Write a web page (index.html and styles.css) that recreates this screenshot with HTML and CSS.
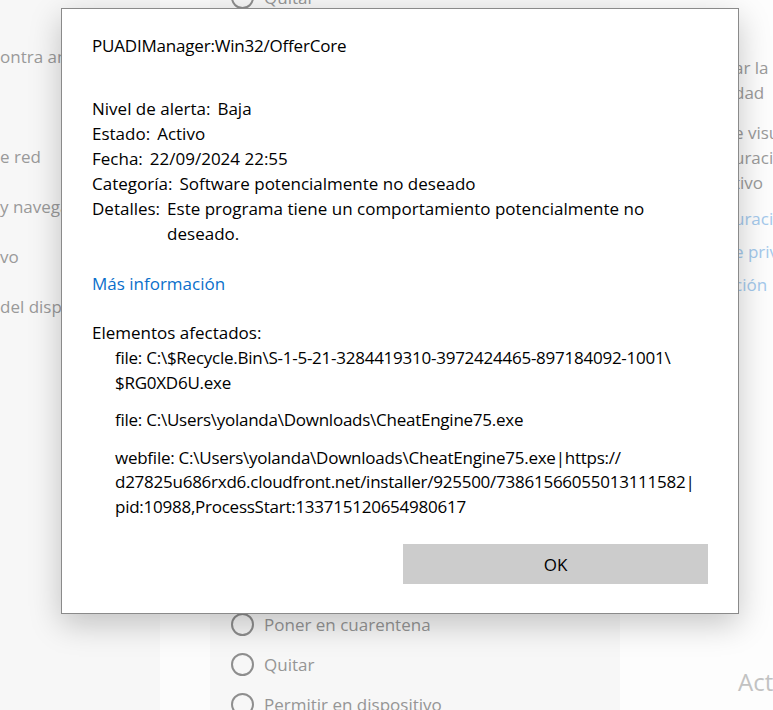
FILE: index.html
```
<!DOCTYPE html>
<html lang="es">
<head>
<meta charset="utf-8">
<title>Windows Security</title>
<link rel="stylesheet" href="styles.css">
</head>
<body>
<div class="page">
  <aside class="sidebar">
    <div class="side-item first">ontra amenazas</div>
    <div class="side-item gap2">e red</div>
    <div class="side-item">y navegador</div>
    <div class="side-item">vo</div>
    <div class="side-item">del dispositivo</div>
  </aside>
  <div class="strip"></div>
  <section class="panel">
    <div class="radio top"><span class="circle"></span><span>Quitar</span></div>
    <div class="radio-group">
      <div class="radio"><span class="circle"></span><span>Poner en cuarentena</span></div>
      <div class="radio"><span class="circle"></span><span>Quitar</span></div>
      <div class="radio"><span class="circle"></span><span>Permitir en dispositivo</span></div>
    </div>
  </section>
  <aside class="right">
    <p class="r-para first">ar la<br>dad</p>
    <p class="r-para">e visu<br>uracio<br>tivo</p>
    <div class="r-links">
      <div class="r-link">uració</div>
      <div class="r-link">e priv</div>
      <div class="r-link">ción</div>
    </div>
    <div class="r-head">Actividad</div>
  </aside>
</div>

<div class="dialog">
  <div class="title">PUADIManager:Win32/OfferCore</div>
  <div class="info">
    <div class="row"><span class="label">Nivel de alerta:</span><span class="value">Baja</span></div>
    <div class="row"><span class="label">Estado:</span><span class="value">Activo</span></div>
    <div class="row"><span class="label">Fecha:</span><span class="value">22/09/2024 22:55</span></div>
    <div class="row"><span class="label">Categoría:</span><span class="value">Software potencialmente no deseado</span></div>
    <div class="row"><span class="label">Detalles:</span><span class="value">Este programa tiene un comportamiento potencialmente no deseado.</span></div>
  </div>
  <a class="more" href="#">Más información</a>
  <div class="affected-title">Elementos afectados:</div>
  <ul class="affected">
    <li>file: C:\$Recycle.Bin\S-1-5-21-3284419310-3972424465-897184092-1001\<br>$RG0XD6U.exe</li>
    <li>file: C:\Users\yolanda\Downloads\CheatEngine75.exe</li>
    <li>webfile: C:\Users\yolanda\Downloads\CheatEngine75.exe|https://<br>d27825u686rxd6.cloudfront.net/installer/925500/73861566055013111582|<br>pid:10988,ProcessStart:133715120654980617</li>
  </ul>
  <div class="actions"><button class="ok">OK</button></div>
</div>
</body>
</html>
```
FILE: styles.css
```
html, body {
  margin: 0;
  padding: 0;
}
body {
  width: 773px;
  height: 710px;
  overflow: hidden;
  position: relative;
  background: #fdfdfd;
  font-family: "Open Sans", "Noto Sans", sans-serif;
  color: #000;
}
.page {
  display: flex;
  height: 710px;
  font-size: 17px;
  color: #9a9a9a;
}
.sidebar {
  width: 160px;
  flex: none;
  background: #f7f7f7;
  overflow: hidden;
  white-space: nowrap;
}
.side-item {
  height: 50px;
  line-height: 50px;
}
.side-item.first {
  margin-top: 32px;
}
.side-item.gap2 {
  margin-top: 50px;
}
.strip {
  width: 50px;
  flex: none;
  background: #fcfcfc;
}
.panel {
  width: 410px;
  flex: none;
  background: #f7f7f7;
  overflow: hidden;
  padding-left: 21px;
  box-sizing: border-box;
}
.radio {
  display: flex;
  align-items: center;
  gap: 10px;
  height: 40px;
  color: #959595;
  white-space: nowrap;
}
.radio.top {
  margin-top: -23px;
}
.radio-group {
  margin-top: 587px;
}
.circle {
  width: 19px;
  height: 19px;
  border: 2px solid #8e8e8e;
  border-radius: 50%;
  flex: none;
}
.right {
  flex: 1;
  overflow: hidden;
  white-space: nowrap;
  padding-left: 114px;
}
.r-para {
  margin: 0;
  line-height: 25px;
}
.r-para.first {
  margin-top: 55px;
}
.r-para + .r-para {
  margin-top: 15px;
}
.r-links {
  margin-top: 7px;
}
.r-link {
  color: #a4c9ec;
  line-height: 33px;
}
.r-head {
  margin-top: 365px;
  margin-left: 4px;
  font-size: 24px;
  color: #c2c2c2;
  line-height: 32px;
}

.dialog {
  position: absolute;
  left: 61px;
  top: 8px;
  width: 678px;
  box-sizing: border-box;
  background: #fff;
  border: 1px solid #8a8a8a;
  box-shadow: 0 10px 30px rgba(0, 0, 0, 0.22);
  padding: 24px 30px 29px 30px;
  font-size: 17px;
  line-height: 25px;
  color: #000;
}
.title {
  line-height: 25px;
  letter-spacing: -0.2px;
}
.info {
  margin-top: 38px;
}
.row {
  display: flex;
}
.label {
  flex: none;
  margin-right: 7px;
}
.value {
  flex: 1;
}
.more {
  display: inline-block;
  margin-top: 25px;
  color: #0a6fcb;
  text-decoration: none;
}
.affected-title {
  margin-top: 24px;
}
.affected {
  list-style: none;
  margin: 1px 0 0 0;
  padding: 0 0 0 23px;
  line-height: 24.5px;
  white-space: nowrap;
  letter-spacing: -0.25px;
}
.affected li + li {
  margin-top: 13px;
}
.actions {
  display: flex;
  justify-content: flex-end;
  margin-top: 25px;
}
.ok {
  width: 305px;
  height: 40px;
  border: none;
  background: #cccccc;
  font-family: inherit;
  font-size: 17px;
  color: #000;
  padding: 0;
}
```
